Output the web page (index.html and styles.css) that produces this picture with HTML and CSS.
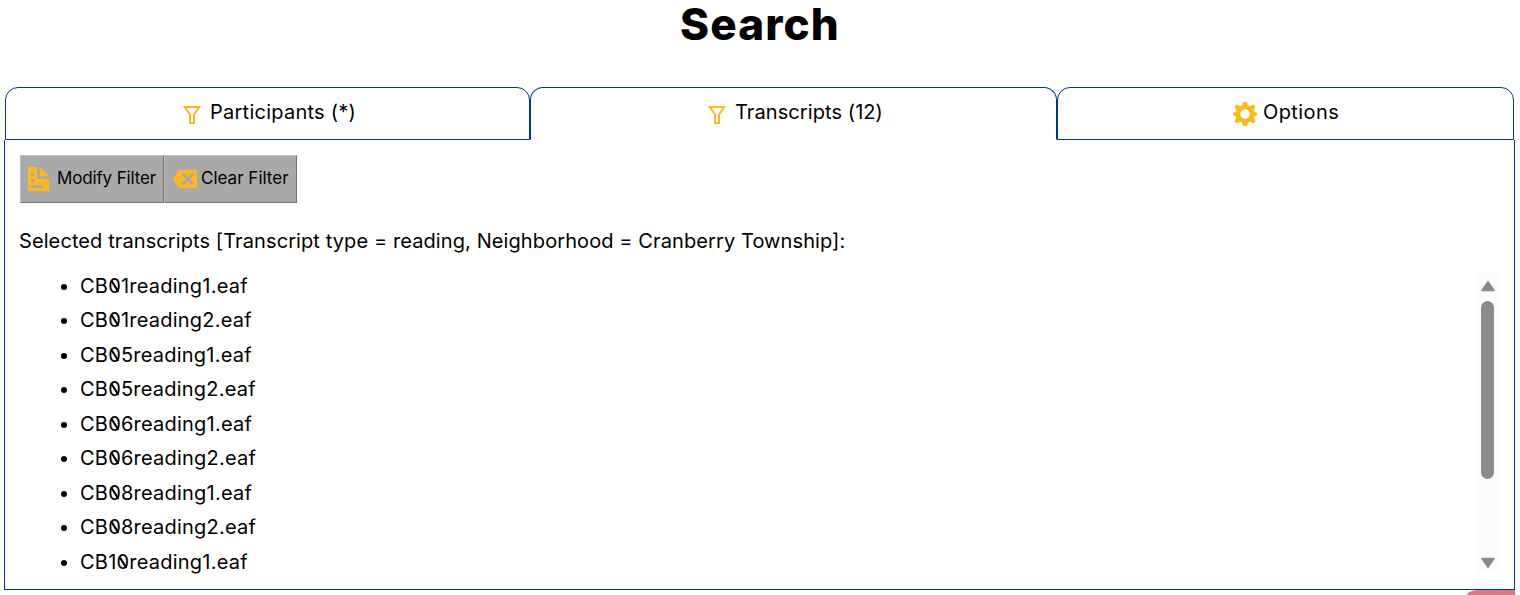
FILE: index.html
```html
<!DOCTYPE html>
<html lang="en">
<head>
<meta charset="utf-8">
<title>Search</title>
<link rel="stylesheet" href="styles.css">
</head>
<body>
<h1 class="title">Search</h1>
<nav class="tabs">
  <a class="tab tab-participants"><svg class="funnel" viewBox="0 0 18 18"><path d="M1.7 1H16.3L11 8.5V17H7V8.5Z"/></svg><span class="t-participants">Participants (*)</span></a>
  <a class="tab tab-transcripts active"><svg class="funnel" viewBox="0 0 18 18"><path d="M1.7 1H16.3L11 8.5V17H7V8.5Z"/></svg><span class="t-transcripts">Transcripts (12)</span></a>
  <a class="tab tab-options"><svg class="gear" viewBox="0 0 24 24"><path fill-rule="evenodd" d="M10 0h4l1 3.5 2 .8 3.2-1.8 2.3 2.3L20.700 8l.8 2 2.5.8v2.400l-2.500.8-.8 2 1.800 3.200-2.300 2.300L17 19.700l-2 .8L14 24h-4l-1-3.500-2-.8-3.200 1.800-2.300-2.300L3.300 16l-.8-2L0 13.200v-2.400L2.500 10l.8-2L1.500 4.800l2.300-2.300L7 4.300l2-.8ZM12 7.200a4.800 4.800 0 1 0 0 9.600a4.800 4.800 0 1 0 0-9.600Z"/></svg><span class="t-options">Options</span></a>
</nav>
<main class="panel">
  <div class="buttons">
    <button class="btn btn-modify"><svg class="doc" viewBox="0 0 22 24"><path fill-rule="evenodd" d="M0 0H9V12H21V24H0ZM3 6V9H6V6ZM3 12V15H6V12ZM3 18V21H15V18ZM12 0L21 9H12Z"/></svg><span>Modify Filter</span></button><button class="btn btn-clear"><svg class="clear" viewBox="0 0 24 18"><path d="M6 0H24V18H6L0 9Z"/><path class="cross" d="M9.500 3.800L20 14.200M20 3.800L9.500 14.200"/></svg><span>Clear Filter</span></button>
  </div>
  <p class="summary">Selected transcripts [Transcript type = reading, Neighborhood = Cranberry Township]:</p>
  <div class="results">
    <ul class="files">
      <li>CB<i>0</i>1reading1.eaf</li>
      <li>CB<i>0</i>1reading2.eaf</li>
      <li>CB<i>0</i>5reading1.eaf</li>
      <li>CB<i>0</i>5reading2.eaf</li>
      <li>CB<i>0</i>6reading1.eaf</li>
      <li>CB<i>0</i>6reading2.eaf</li>
      <li>CB<i>0</i>8reading1.eaf</li>
      <li>CB<i>0</i>8reading2.eaf</li>
      <li>CB1<i>0</i>reading1.eaf</li>
    </ul>
    <div class="scrollbar">
      <svg class="arrow" viewBox="0 0 14 11"><path d="M7 1.500L12.500 9.500H1.500Z"/></svg>
      <div class="thumb"></div>
      <svg class="arrow arrow-down" viewBox="0 0 14 11"><path d="M7 9.500L12.500 1.500H1.500Z"/></svg>
    </div>
  </div>
</main>
<div class="corner"></div>
</body>
</html>
```
FILE: styles.css
```css
* { box-sizing: border-box; }
body {
  margin: 0;
  height: 595px;
  overflow: hidden;
  background: #fff;
  color: #000;
  font: 20px/34.5px Inter, "Liberation Sans", sans-serif;
}
.title {
  margin: 0;
  height: 87px;
  text-align: center;
  font-size: 44px;
  line-height: 49px;
  font-weight: 800;
  letter-spacing: 1.1px;
}
.tabs { display: flex; margin: 0 6px 0 5px; height: 53px; }
.tab {
  display: flex;
  justify-content: flex-start;
  border: 1px solid #003594;
  border-radius: 13px 13px 0 0;
  white-space: nowrap;
}
.tab span { line-height: 49px; }
.t-participants { letter-spacing: 0.25px; }
.t-transcripts { letter-spacing: 0.08px; }
.t-options { letter-spacing: 0.4px; }
.tab-participants { width: 525px; padding-left: 177px; }
.tab-transcripts { width: 527px; padding-left: 177px; border-bottom-color: transparent; }
.tab-options { flex: 1; padding-left: 175px; }
.funnel { width: 18px; height: 18px; margin: 18px 9px 0 0; fill: none; stroke: #ffb81c; stroke-width: 2; }
.gear { width: 24px; height: 24px; margin: 14px 6px 0 0; fill: #ffb81c; }
.panel {
  height: 450px;
  margin: 0 5px 0 4px;
  padding: 15px 15px 0;
  border: 1px solid #003594;
  border-top: 0;
}
.buttons { display: flex; height: 48px; }
.btn {
  display: flex;
  padding: 0;
  height: 48px;
  font: 17px/44px Inter, "Liberation Sans", sans-serif;
  color: #000;
  background: #a9a9a9;
  border: 1px solid;
  border-color: #bdbdbd #747474 #747474 #bdbdbd;
  white-space: nowrap;
}
.btn-modify { width: 144px; padding-left: 7px; letter-spacing: -0.15px; }
.btn-clear { width: 133px; padding-left: 8px; }
.doc { width: 22px; height: 24px; margin: 11px 7px 0 0; fill: #ffb81c; }
.clear { width: 24px; height: 18px; margin: 14px 4px 0 0; fill: #ffb81c; }
.cross { stroke: #a9a9a9; stroke-width: 3; }
.summary { margin: 21px 0 10px -1px; white-space: nowrap; letter-spacing: 0.095px; }
.results { display: flex; justify-content: space-between; height: 304px; }
.files { margin: 0; padding-left: 60px; height: 310px; letter-spacing: 0.22px; }
.files i { font-style: normal; position: relative; }
.files i::after {
  content: "";
  position: absolute;
  left: 5.5px;
  top: 6px;
  width: 1.5px;
  height: 13px;
  background: #000;
  transform: rotate(-32deg);
}
.scrollbar {
  display: flex;
  flex-direction: column;
  align-items: center;
  width: 23px;
  height: 300px;
  margin-top: 4px;
  padding-top: 7px;
  background: #fcfcfc;
}
.arrow { width: 16px; height: 12px; fill: #8b8b8b; stroke: #8b8b8b; stroke-width: 1.5; stroke-linejoin: round; }
.thumb { width: 13px; height: 178px; margin: 9px 0 78px; border-radius: 7px; background: #8b8b8b; }
.corner {
  width: 48px;
  height: 5px;
  margin-left: 1467px;
  background: #d67c7f;
  border-top-left-radius: 12px 5px;
}
```
